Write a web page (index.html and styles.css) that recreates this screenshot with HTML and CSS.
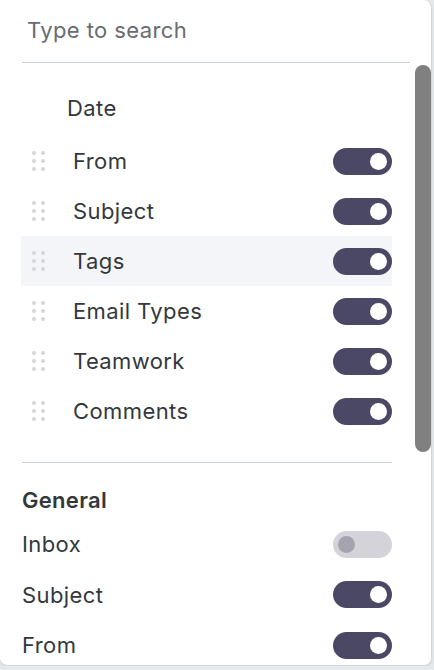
FILE: index.html
```html
<!DOCTYPE html>
<html>
<head>
<meta charset="utf-8">
<link rel="stylesheet" href="styles.css">
</head>
<body>
<div class="panel">
  <div class="search">Type to search</div>
  <div class="rule rule-search"></div>
  <div class="scroll">
    <div class="fixed-row">Date</div>
    <ul class="list">
      <li class="row"><span class="handle"><i></i><i></i><i></i><i></i><i></i><i></i></span><span class="label">From</span><span class="toggle on"><span class="knob"></span></span></li>
      <li class="row"><span class="handle"><i></i><i></i><i></i><i></i><i></i><i></i></span><span class="label">Subject</span><span class="toggle on"><span class="knob"></span></span></li>
      <li class="row hover"><span class="handle"><i></i><i></i><i></i><i></i><i></i><i></i></span><span class="label">Tags</span><span class="toggle on"><span class="knob"></span></span></li>
      <li class="row"><span class="handle"><i></i><i></i><i></i><i></i><i></i><i></i></span><span class="label">Email Types</span><span class="toggle on"><span class="knob"></span></span></li>
      <li class="row"><span class="handle"><i></i><i></i><i></i><i></i><i></i><i></i></span><span class="label">Teamwork</span><span class="toggle on"><span class="knob"></span></span></li>
      <li class="row"><span class="handle"><i></i><i></i><i></i><i></i><i></i><i></i></span><span class="label">Comments</span><span class="toggle on"><span class="knob"></span></span></li>
    </ul>
    <div class="rule rule-section"></div>
    <div class="section-title">General</div>
    <ul class="list plain">
      <li class="row"><span class="label">Inbox</span><span class="toggle off"><span class="knob"></span></span></li>
      <li class="row"><span class="label">Subject</span><span class="toggle on"><span class="knob"></span></span></li>
      <li class="row"><span class="label">From</span><span class="toggle on"><span class="knob"></span></span></li>
    </ul>
  </div>
  <div class="thumb"></div>
</div>
</body>
</html>
```

FILE: styles.css
```css
* { box-sizing: border-box; }
html, body {
  margin: 0;
  padding: 0;
  background: #e6e9ec;
  font-family: Inter, "Noto Sans", sans-serif;
  color: #33383d;
  letter-spacing: 0.4px;
}
.panel {
  position: relative;
  width: 432px;
  height: 666px;
  background: #fff;
  border: 1px solid #d3d6db;
  border-top: none;
  border-left: none;
  border-radius: 0 8px 8px 8px;
  overflow: hidden;
  box-shadow: 0 1px 3px rgba(0,0,0,0.08);
}
.search {
  height: 62px;
  padding-left: 27px;
  display: flex;
  align-items: center;
  font-size: 22px;
  color: #686c71;
  padding-bottom: 2px;
}
.rule {
  height: 1px;
  background: #c9d0d8;
}
.rule-search { margin: 0 21px 0 22px; }
.scroll {
  padding: 21px 0 0 0;
}
.fixed-row {
  height: 48px;
  display: flex;
  align-items: center;
  padding-left: 67px;
  font-size: 22px;
  margin-bottom: 4px;
}
.list {
  list-style: none;
  margin: 0;
  padding: 0 39px 0 21px;
}
.row {
  height: 50px;
  display: flex;
  align-items: center;
  font-size: 22px;
}
.row.hover { background: #f4f5f9; }
.handle {
  width: 14px;
  display: grid;
  grid-template-columns: 4px 4px;
  column-gap: 5px;
  row-gap: 4px;
  margin-left: 11px;
  margin-right: 27px;
}
.handle i {
  width: 4px;
  height: 4px;
  border-radius: 50%;
  background: #d6d6da;
  display: block;
}
.label { flex: 1; }
.toggle {
  width: 59px;
  height: 27px;
  border-radius: 14px;
  display: flex;
  align-items: center;
  padding: 0 5px;
}
.toggle .knob {
  width: 17px;
  height: 17px;
  border-radius: 50%;
}
.toggle.on { background: #4a4864; justify-content: flex-end; }
.toggle.on .knob { background: #fff; }
.toggle.off { background: #d4d3d9; justify-content: flex-start; }
.toggle.off .knob { background: #a5a3af; }
.rule-section { margin: 26px 39px 0 22px; background: #c8d1dc; }
.section-title {
  height: 39px;
  margin-top: 17px;
  padding-left: 22px;
  display: flex;
  align-items: center;
  font-size: 22px;
  font-weight: 600;
  letter-spacing: 0.3px;
}
.plain { padding-left: 22px; }
.plain .row { height: 50.5px; }
.thumb {
  position: absolute;
  right: 0;
  top: 65px;
  width: 16px;
  height: 387px;
  border-radius: 8px;
  background: #808080;
}
```
